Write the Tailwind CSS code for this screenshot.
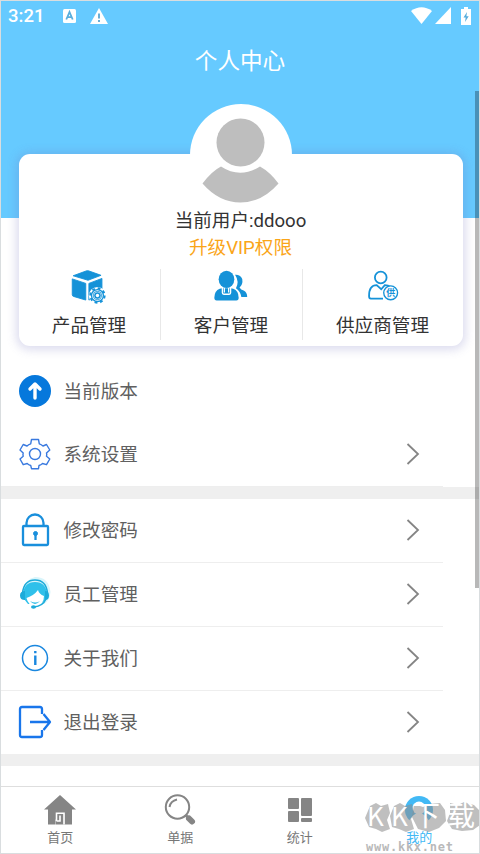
<!DOCTYPE html>
<html lang="zh-CN">
<head>
<meta charset="utf-8">
<title>个人中心</title>
<script src="https://cdn.jsdelivr.net/npm/@tailwindcss/browser@4"></script>
</head>
<body class="bg-white font-[Roboto,'Noto_Sans_CJK_SC',sans-serif]">
<div class="relative flex h-[854px] w-[480px] flex-col overflow-hidden border border-[#d9dddf] bg-white">
  <header class="h-[217px] shrink-0 bg-[#66caff] text-white">
    <div class="flex h-[31px] items-center pr-[8px] pl-[7px]">
      <span class="w-[55px] text-[18.500px] leading-[31px] font-medium">3:21</span>
      <svg class="-mt-[1px] h-[14px] w-[13px]" viewBox="0 0 13 14"><rect width="13" height="14" rx="1.5" fill="#fff"/><path d="M3.300 10.500L6.500 3l3.200 7.500M4.500 8.200h4" fill="none" stroke="#58aede" stroke-width="1.800"/></svg>
      <svg class="-mt-[2px] ml-[14px] h-[16px] w-[18px]" viewBox="0 0 18 16"><path d="M9 0l9 16H0z" fill="#fff"/><path d="M9 5.500v5M9 12v2" stroke="#5aa6d2" stroke-width="1.800"/></svg>
      <div class="-mt-[2px] ml-auto flex items-center">
        <svg class="h-[17px] w-[21px]" viewBox="0 0 21 17"><path d="M0 4Q10.500-3.500 21 4L10.500 17z" fill="#fff"/></svg>
        <svg class="ml-[3px] h-[17px] w-[16px]" viewBox="0 0 16 17"><path d="M16 0v17H0z" fill="#fff"/></svg>
        <svg class="ml-[10px] h-[18px] w-[10px]" viewBox="0 0 10 18"><path d="M3 0h4v2h3v16H0V2h3z" fill="#fff"/><path d="M6 5L2.500 10.500h2.200L4 15l3.700-5.700H5.400z" fill="#55acdc"/></svg>
      </div>
    </div>
    <h1 class="mt-[15px] text-center text-[22.600px] leading-[30px] font-normal">个人中心</h1>
  </header>

  <main class="relative flex-1">
    <section class="relative -mt-[64px] ml-[17.500px] flex h-[192px] w-[444px] flex-col rounded-[11px] bg-white shadow-[0_1px_10px_3px_rgba(112,112,190,0.24)]">
      <div class="mx-auto -mt-[50.500px] h-[102px] w-[102px] shrink-0 rounded-full bg-white">
        <svg class="h-[102px] w-[102px]" viewBox="0 0 102 102"><circle cx="50.500" cy="38.500" r="24" fill="#bebebe"/><path d="M31 62.500Q50 75 70 62.500Q80 68 88.500 79.500Q72 98.500 50.500 98.500Q29 98.500 12.500 79.500Q22 67 31 62.500z" fill="#bebebe"/></svg>
      </div>
      <p class="mt-[1px] text-center text-[18.600px] leading-[28px] text-[#333]">当前用户:ddooo</p>
      <p class="text-center text-[18.600px] leading-[27px] text-[#faa519]">升级VIP权限</p>
      <div class="mt-[7px] flex h-[71px] text-[18.600px] text-[#333]">
        <div class="flex w-[142px] flex-col items-center border-r border-[#e8e8e8]">
          <svg class="-ml-[2px] h-[40px] w-[40px]" viewBox="0 0 40 40" fill="#1592d8" stroke-linejoin="round"><path d="M3.500 7.500L18.500 2Q19.500 1.700 20.500 2L34.500 7L20 12.500z" stroke="#1592d8"/><path d="M2.500 11L17.500 16v18.500L4 30.500Q2.500 30 2.500 28.500z" stroke="#1592d8"/><path d="M21 16L35.500 10.500V28L21 34.500z" stroke="#1592d8"/><circle cx="30.500" cy="29.500" r="9.600" fill="#fff"/><g fill="none" stroke="#1592d8"><circle cx="30.500" cy="29.500" r="6.600" stroke-width="1.500"/><circle cx="30.500" cy="29.500" r="8" stroke-width="2.200" stroke-dasharray="3.140 3.140"/></g><circle cx="30.500" cy="29.500" r="5"/><circle cx="30.500" cy="29.500" r="4" fill="none" stroke="#fff" stroke-width=".6"/><circle cx="30.500" cy="29.500" r="1.900" fill="#fff"/></svg>
          <span class="mt-[7px] leading-[28px]">产品管理</span>
        </div>
        <div class="flex w-[142px] flex-col items-center border-r border-[#e8e8e8]">
          <svg class="h-[40px] w-[40px]" viewBox="0 0 40 40" fill="#1592d8"><path d="M24.500 6.500Q30 6 32.500 11Q33.500 17 29.500 20.500Q31 23 34 24Q38 26 38 31H31.500Q30.500 25 25.500 21.500Q29.500 14 24.500 6.500z"/><ellipse cx="15" cy="11.500" rx="8.700" ry="9.500"/><path d="M7.500 22Q1.500 24 1.500 32Q1.500 35 4 35H26Q28.500 35 28.500 32Q28.500 24 22.500 22L19.500 21.500H10.500z"/><path d="M10.500 21v5.500q0 1.500 1.500 1.500h6q1.500 0 1.500-1.500v-5.500" fill="none" stroke="#fff" stroke-width="1.600"/><path d="M12 21h1.300v5h-1.300zM16.700 21h1.300v5h-1.300z" fill="#fff"/></svg>
          <span class="mt-[7px] leading-[28px]">客户管理</span>
        </div>
        <div class="flex w-[160px] flex-col items-center">
          <svg class="h-[40px] w-[40px]" viewBox="0 0 40 40" fill="none" stroke="#1592d8" stroke-width="2"><circle cx="17.500" cy="9.500" r="6.500"/><path d="M20 33H6.500Q4.500 33 4.500 30Q4.500 18 13 18L18 22.500L22 18Q26 18 28 20"/><circle cx="28.500" cy="26.500" r="7.700" fill="#fff" stroke-width="1.500"/><text x="28.500" y="30.200" font-size="10" font-weight="700" text-anchor="middle" fill="#1592d8" stroke="none">供</text></svg>
          <span class="mt-[7px] leading-[28px]">供应商管理</span>
        </div>
      </div>
    </section>

    <nav class="mt-[13px] text-[18.600px] text-[#606060]">
      <div class="flex h-[64px] w-[442px] items-center pb-[1px] pl-[17px]">
        <svg class="h-[34px] w-[34px]" viewBox="0 0 34 34"><circle cx="17" cy="17" r="16" fill="#0678dc"/><path d="M17 24V11M12 15L17 10L22 15" fill="none" stroke="#fff" stroke-width="3.400" stroke-linecap="round" stroke-linejoin="round"/></svg>
        <span class="mt-[4px] ml-[11.500px]">当前版本</span>
      </div>
      <div class="flex h-[64px] w-[442px] items-center border-b border-[#eee] pb-[1px] pl-[17px]">
        <svg class="h-[34px] w-[34px]" viewBox="0 0 34 34" fill="none" stroke="#3979df" stroke-width="1.400" stroke-linejoin="round"><path d="M13.500 2.500h7l.800 4.300q2 .700 3.700 2.200l3.500-1.500 3.300 5.500-3.300 3q.500 1.500 0 3.300l3.300 2.700-3.300 5.700-4-1.200q-1.500 1.500-3.500 2l-.500 3.200h-7l-.800-3.200q-2-.500-3.500-2l-4 1.200-3.200-5.700 3.200-2.700q-.500-1.800 0-3.300l-3.200-3 3.200-5.500L9 9q1.500-1.500 3.700-2.200z"/><circle cx="17" cy="17" r="5.500"/></svg>
        <span class="mt-[4px] ml-[11.500px]">系统设置</span>
        <svg class="mr-[23.500px] ml-auto h-[24px] w-[14px]" viewBox="0 0 14 24" fill="none" stroke="#858585" stroke-width="1.800"><path d="M1.500 2L12 12L1.500 22"/></svg>
      </div>
      <div class="h-[12px] bg-[#efefef]"></div>
      <div class="flex h-[64px] w-[442px] items-center border-b border-[#eee] pb-[1px] pl-[17px]">
        <svg class="h-[34px] w-[34px]" viewBox="0 0 34 34" fill="none" stroke="#198fdc" stroke-width="2.300"><path d="M8.500 13V10a8.500 8.500 0 0117 0v3"/><rect x="5" y="13" width="25" height="19" rx="1"/><circle cx="17.500" cy="20.500" r="2" fill="#198fdc" stroke-width="1"/><path d="M17.500 21v6"/></svg>
        <span class="mt-[4px] ml-[11.500px]">修改密码</span>
        <svg class="mr-[23.500px] ml-auto h-[24px] w-[14px]" viewBox="0 0 14 24" fill="none" stroke="#858585" stroke-width="1.800"><path d="M1.500 2L12 12L1.500 22"/></svg>
      </div>
      <div class="flex h-[64px] w-[442px] items-center border-b border-[#eee] pb-[1px] pl-[17px]">
        <svg class="h-[34px] w-[34px]" viewBox="0 0 34 34"><path d="M17 0Q31 0 32.500 15Q32 23 26 27L6 12Q8 2 17 0z" fill="#d9f5fb"/><path d="M5 17Q6 5 17 5Q28 5 29 17L27 24L22 27L10 27L6 22z" fill="#2fc0ea"/><path d="M8.500 21Q16 18.500 20 13Q21 17 26 19Q26 28 17.500 29.500Q10 28.500 8.500 21z" fill="#fff"/><path d="M12 24q5.500 3 10 0q-5 6-10 0z" fill="#2bbbe6"/><path d="M4.500 16Q6 3 17 3Q28 3 29.500 16M28 22Q25 29 16 30" fill="none" stroke="#1cabda" stroke-width="1.500"/><path d="M7 14q-5 0-5 4.500t5 4.500zM27 14q4 0 4 4.500T27 23z" fill="#1cabda"/><ellipse cx="15.500" cy="30" rx="2.500" ry="1.800" fill="#1cabda"/></svg>
        <span class="mt-[4px] ml-[11.500px]">员工管理</span>
        <svg class="mr-[23.500px] ml-auto h-[24px] w-[14px]" viewBox="0 0 14 24" fill="none" stroke="#858585" stroke-width="1.800"><path d="M1.500 2L12 12L1.500 22"/></svg>
      </div>
      <div class="flex h-[64px] w-[442px] items-center border-b border-[#eee] pb-[1px] pl-[17px]">
        <svg class="h-[34px] w-[34px]" viewBox="0 0 34 34" fill="none" stroke="#1987df"><circle cx="17" cy="17" r="12.500" stroke-width="1.500"/><path d="M17.300 14.500v9.500M17.300 10v2.300" stroke-width="2.400"/></svg>
        <span class="mt-[4px] ml-[11.500px]">关于我们</span>
        <svg class="mr-[23.500px] ml-auto h-[24px] w-[14px]" viewBox="0 0 14 24" fill="none" stroke="#858585" stroke-width="1.800"><path d="M1.500 2L12 12L1.500 22"/></svg>
      </div>
      <div class="flex h-[63px] w-[442px] items-center pb-[1px] pl-[17px]">
        <svg class="h-[34px] w-[34px]" viewBox="0 0 34 34" fill="none" stroke="#1976eb" stroke-width="2.300" stroke-linejoin="round"><path d="M24 9V4Q24 2 22 2H4Q2 2 2 4V30Q2 32 4 32H22Q24 32 24 30V25M12 17H32M25.500 9L32 17L25.500 25"/></svg>
        <span class="mt-[4px] ml-[11.500px]">退出登录</span>
        <svg class="mr-[23.500px] ml-auto h-[24px] w-[14px]" viewBox="0 0 14 24" fill="none" stroke="#858585" stroke-width="1.800"><path d="M1.500 2L12 12L1.500 22"/></svg>
      </div>
      <div class="h-[12px] bg-[#efefef]"></div>
    </nav>
  </main>

  <footer class="grid h-[67px] shrink-0 grid-cols-4 border-t-[1.500px] border-[#dedede] text-[13px] text-[#777]">
    <div class="flex flex-col items-center pt-[7px]">
      <svg class="-ml-[1px] h-[32px] w-[34px]" viewBox="0 0 34 32" fill="#858585"><path d="M17 1L33 15.500H29V30.500H21.500V19.500H14V25.500H12.500V30.500H5V15.500H1z"/><path d="M12.800 30.500V19H21.700V30.500z" fill="#858585"/><path d="M13.500 27h3.500v-5.500M13.500 27V19.200H21V30.500" fill="none" stroke="#fff" stroke-width="1.600"/></svg>
      <span class="mt-[2px] -ml-[1px] leading-[20px]">首页</span>
    </div>
    <div class="flex flex-col items-center pt-[7px]">
      <svg class="h-[32px] w-[34px]" viewBox="0 0 34 32" fill="none" stroke="#858585"><circle cx="14.500" cy="13" r="11.700" stroke-width="2"/><path d="M6.500 13Q7.500 7 14 5.500" stroke-width="2"/><path d="M22.500 21l3 3" stroke-width="3"/><path d="M26 24.500l3 3" stroke-width="6" stroke-linecap="round"/></svg>
      <span class="mt-[2px] leading-[20px]">单据</span>
    </div>
    <div class="flex flex-col items-center pt-[7px]">
      <svg class="h-[32px] w-[34px]" viewBox="0 0 34 32" fill="#858585"><rect x="5" y="4" width="11" height="11" rx="1"/><rect x="18" y="4" width="11" height="18" rx="1"/><rect x="5" y="17" width="11" height="11" rx="1"/><rect x="18" y="24" width="11" height="4" rx="1"/></svg>
      <span class="mt-[2px] leading-[20px]">统计</span>
    </div>
    <div class="flex flex-col items-center pt-[7px] text-[#42b9f5]">
      <svg class="h-[32px] w-[34px]" viewBox="0 0 34 32"><circle cx="17" cy="16" r="14" fill="#42b9f5"/><circle cx="17" cy="14" r="6.500" fill="#fff"/><path d="M5 31Q10 19 17 19Q24 19 29 31z" fill="#fff"/></svg>
      <span class="mt-[2px] leading-[20px]">我的</span>
    </div>
  </footer>

  <svg class="absolute top-[794px] left-[361px] h-[58px] w-[118px]" viewBox="0 0 118 58">
    <g fill="#8d8d8d" fill-opacity=".56"><path d="M8 11L14 8L19 11L26 9L28 18L25 25L28 34L20 37L14 34L7 32L3 23z"/><path d="M32 11L38 8L43 11L50 9L52 18L49 24L52 34L44 37L37 34L30 32L28 21z"/><path d="M52 9L61 12L67 9L78 8L83 15L84 26L77 33L67 37L56 34L50 22z"/><path d="M88 8L96 10L102 7L112 10L118 16V30L111 35L100 36L90 34L85 26L88 18z"/></g>
    <g fill="#fff" font-family="Noto Sans CJK SC" font-weight="400"><text x="5" y="31" font-size="26">K</text><text x="29" y="31" font-size="26">K</text><text x="50" y="31" font-size="28">下</text><text x="85" y="31" font-size="28">载</text></g>
    <text x="4" y="56" font-family="DejaVu Sans Mono" font-size="12" font-weight="700" textLength="87" fill="#a6a6a6" fill-opacity=".8">www.kkx.net</text>
  </svg>
  <div class="absolute top-[90px] right-0 h-[497px] w-[4px] bg-black/28"></div>
</div>
</body>
</html>
